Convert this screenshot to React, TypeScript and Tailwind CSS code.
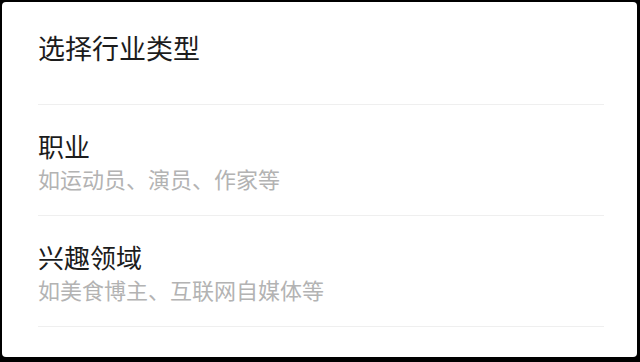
const ITEMS = [
  { title: '职业', desc: '如运动员、演员、作家等' },
  { title: '兴趣领域', desc: '如美食博主、互联网自媒体等' },
];

export default function App() {
  return (
    <div
      className="w-[640px] h-[362px] bg-black pt-[2px] pl-[2px] overflow-hidden"
      style={{ fontFamily: '"Noto Sans CJK SC", "Noto Sans", sans-serif' }}
    >
      <div className="w-[635px] h-[355px] bg-white rounded-[4px] px-[36px] pr-[33px]">
        <div className="h-[103px] pt-[32px] border-b border-[#efefef]">
          <div className="text-[27px] leading-[27px] text-[#1c1c1c]">选择行业类型</div>
        </div>
        {ITEMS.map((it) => (
          <div key={it.title} className="pt-[28px] pb-[26px] border-b border-[#efefef]">
            <div className="text-[26px] leading-[26px] text-[#1c1c1c]">{it.title}</div>
            <div className="mt-[8px] text-[22px] leading-[22px] text-[#b3b3b3]">{it.desc}</div>
          </div>
        ))}
      </div>
    </div>
  );
}
